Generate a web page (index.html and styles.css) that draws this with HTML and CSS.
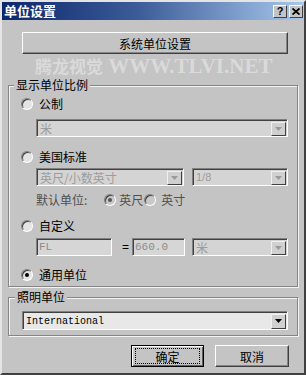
FILE: index.html
```html
<!DOCTYPE html>
<html>

<head>
    <title>单位设置</title>
    <link rel="stylesheet" href="styles.css">
</head>

<body>
    <div class="window">
        <div class="titlebar">
            <span class="title">单位设置</span>
            <div class="titleButtons">
                <span class="tbtn">?</span>
                <span class="tbtn">
                    <svg width="8" height="7" viewBox="0 0 8 7"><path d="M0.5 0.5 L7.5 6.5 M7.5 0.5 L0.5 6.5" stroke="#000" stroke-width="1.8"/></svg>
                </span>
            </div>
        </div>

        <div class="btn sysButton">系统单位设置</div>
        <div class="watermark"><span class="wmCn">腾龙视觉</span> WWW.TLVI.NET</div>

        <!-- 显示单位比例 -->
        <fieldset class="group scaleGroup">
            <legend>显示单位比例</legend>
            <div class="row first"><span class="radio"></span><span class="label">公制</span></div>
            <div class="select disabled metric">
                <span class="value">米</span>
                <span class="arrow"><svg width="7" height="4" viewBox="0 0 7 4"><path d="M0 0 H7 L3.5 4 Z" fill="#9a9a9a"/></svg></span>
            </div>

            <div class="row us"><span class="radio"></span><span class="label">美国标准</span></div>
            <div class="pair">
                <div class="select disabled feet">
                    <span class="value">英尺/小数英寸</span>
                    <span class="arrow"><svg width="7" height="4" viewBox="0 0 7 4"><path d="M0 0 H7 L3.5 4 Z" fill="#9a9a9a"/></svg></span>
                </div>
                <div class="select disabled frac">
                    <span class="value latin">1/8</span>
                    <span class="arrow"><svg width="7" height="4" viewBox="0 0 7 4"><path d="M0 0 H7 L3.5 4 Z" fill="#9a9a9a"/></svg></span>
                </div>
            </div>
            <div class="row defaultUnit">
                <span class="label dim">默认单位:</span>
                <span class="radio checked dimRadio r1"></span><span class="label dim l1">英尺</span>
                <span class="radio dimRadio r2"></span><span class="label dim l2">英寸</span>
            </div>

            <div class="row custom"><span class="radio"></span><span class="label">自定义</span></div>
            <div class="pair inputs">
                <div class="input nameInput">FL</div>
                <span class="equals">=</span>
                <div class="input numInput">660.0</div>
                <div class="select disabled frac">
                    <span class="value">米</span>
                    <span class="arrow"><svg width="7" height="4" viewBox="0 0 7 4"><path d="M0 0 H7 L3.5 4 Z" fill="#9a9a9a"/></svg></span>
                </div>
            </div>

            <div class="row generic"><span class="radio checked"></span><span class="label">通用单位</span></div>
        </fieldset>

        <!-- 照明单位 -->
        <fieldset class="group lightGroup">
            <legend>照明单位</legend>
            <div class="select lighting">
                <span class="value mono">International</span>
                <span class="arrow"><svg width="7" height="4" viewBox="0 0 7 4"><path d="M0 0 H7 L3.5 4 Z" fill="#000"/></svg></span>
            </div>
        </fieldset>

        <div class="buttonBox">
            <div class="btn okButton"><span class="focus">确定</span></div>
            <div class="btn cancelButton">取消</div>
        </div>
    </div>
</body>

</html>
```

FILE: styles.css
```css
/* 旧式 Windows 对话框 */
body {
    margin: 0;
    font-family: "Noto Sans CJK SC", sans-serif;
    font-size: 12px;
    color: #000;
    background: #c4c4c4;
}

.window {
    width: 306px;
    height: 375px;
    box-sizing: border-box;
    border: 2px solid;
    border-color: #e4e4e4 #404040 #404040 #e4e4e4;
    background-color: #c4c4c4;
}

.titlebar {
    height: 18px;
    display: flex;
    align-items: center;
    justify-content: space-between;
    padding: 0 1px 0 2px;
    background: linear-gradient(to right, #0c266c, #3c5c98 45%, #a8c8ee);
}

.title {
    color: white;
    font-weight: bold;
    font-size: 13px;
    line-height: 18px;
}

.titleButtons {
    display: flex;
    gap: 2px;
}

.tbtn {
    width: 14px;
    height: 13px;
    box-sizing: border-box;
    display: flex;
    align-items: center;
    justify-content: center;
    background: #c4c4c4;
    border: 1px solid;
    border-color: #fff #404040 #404040 #fff;
    font-family: "Liberation Sans", sans-serif;
    font-weight: bold;
    font-size: 11px;
    line-height: 11px;
}

.btn {
    box-sizing: border-box;
    height: 22px;
    display: flex;
    align-items: center;
    justify-content: center;
    background: #c4c4c4;
    border: 1px solid;
    border-color: #fff #404040 #404040 #fff;
    box-shadow: inset -1px -1px 0 #858585;
    font-size: 12px;
}

.sysButton {
    margin: 12px 0 0 20px;
    width: 266px;
}

.watermark {
    height: 24px;
    line-height: 24px;
    padding-left: 33px;
    color: rgba(255, 255, 255, 0.38);
    font-family: "Liberation Serif", serif;
    font-weight: bold;
    font-size: 21px;
    white-space: nowrap;
}

.wmCn {
    font-family: "Noto Sans CJK SC", sans-serif;
    font-size: 17px;
}

.group {
    margin: 0 6px;
    border: 1px solid #858585;
    box-shadow: inset 1px 1px 0 #f4f4f4, 1px 1px 0 #f4f4f4;
}

.group legend {
    margin-left: -7px;
    padding: 0 2px;
    line-height: 14px;
    background: #c4c4c4;
}

.scaleGroup {
    padding: 0 9px 3px 12px;
}

.lightGroup {
    margin-top: 3px;
    padding: 0 9px 5px 13px;
}

.row {
    height: 16px;
    display: flex;
    align-items: center;
    line-height: 16px;
}

.row.first { margin-top: 4px; }
.row.us { margin-top: 12px; }
.row.defaultUnit { margin-top: 6px; margin-left: 15px; }
.row.custom { margin-top: 10px; }
.row.generic { margin-top: 11px; }

.radio {
    width: 12px;
    height: 12px;
    box-sizing: border-box;
    border-radius: 50%;
    border: 1px solid;
    border-color: #808080 #fff #fff #808080;
    box-shadow: inset 1px 1px 0 #404040;
    background: #e4e4e4;
    display: flex;
    align-items: center;
    justify-content: center;
    flex-shrink: 0;
}

.radio.checked::after {
    content: "";
    width: 4px;
    height: 4px;
    border-radius: 50%;
    background: #000;
}

.dimRadio {
    background: #c8c8c8;
}

.dimRadio.checked::after {
    background: #555;
}

.label {
    margin-left: 6px;
}

.label.dim {
    margin-left: 0;
    color: #505050;
}

.r1 { margin-left: 17px; }
.l1 { margin-left: 3px !important; }
.r2 { margin-left: 1px; }
.l2 { margin-left: 5px !important; }

.select {
    height: 18px;
    box-sizing: border-box;
    display: flex;
    align-items: center;
    justify-content: space-between;
    border: 1px solid;
    border-color: #808080 #fff #fff #808080;
    box-shadow: inset 1px 1px 0 #404040;
    background: #d4d4d4;
    padding: 1px 1px 0 3px;
}

.select .value {
    line-height: 15px;
    white-space: nowrap;
    overflow: hidden;
}

.select.disabled .value {
    color: #9c9c9c;
}

.latin {
    font-family: "Liberation Sans", sans-serif;
    font-size: 11px;
}

.mono {
    font-family: "Liberation Mono", monospace;
    font-size: 10px;
}

.arrow {
    width: 15px;
    height: 14px;
    box-sizing: border-box;
    display: flex;
    align-items: center;
    justify-content: center;
    background: #d0d0d0;
    border: 1px solid;
    border-color: #f0f0f0 #404040 #404040 #f0f0f0;
    flex-shrink: 0;
}

.metric {
    margin: 7px 0 0 15px;
    width: 252px;
}

.pair {
    display: flex;
    align-items: center;
    margin: 3px 0 0 15px;
}

.feet {
    width: 148px;
}

.frac {
    width: 96px;
    margin-left: auto;
}

.inputs {
    margin-top: 4px;
}

.input {
    height: 18px;
    box-sizing: border-box;
    border: 1px solid;
    border-color: #808080 #fff #fff #808080;
    box-shadow: inset 1px 1px 0 #404040;
    background: #d6d6d6;
    color: #8c8c8c;
    font-family: "Liberation Mono", monospace;
    font-size: 11px;
    line-height: 16px;
    padding-left: 2px;
}

.nameInput {
    width: 76px;
}

.equals {
    margin: 0 3px 0 10px;
    font-family: "Liberation Sans", sans-serif;
    font-size: 12px;
}

.numInput {
    width: 53px;
}

.lighting {
    margin-top: 7px;
    width: 266px;
    height: 19px;
    background: #e8e8e8;
}

.lighting .arrow {
    height: 15px;
}

.buttonBox {
    display: flex;
    justify-content: flex-end;
    gap: 11px;
    margin-top: 9px;
    padding-right: 15px;
}

.okButton {
    width: 73px;
    border: 1px solid #000;
    box-shadow: inset 1px 1px 0 #fff, inset -1px -1px 0 #606060;
}

.focus {
    display: flex;
    align-items: center;
    justify-content: center;
    width: 63px;
    height: 14px;
    outline: 1px dotted #000;
}

.cancelButton {
    width: 74px;
}
```
